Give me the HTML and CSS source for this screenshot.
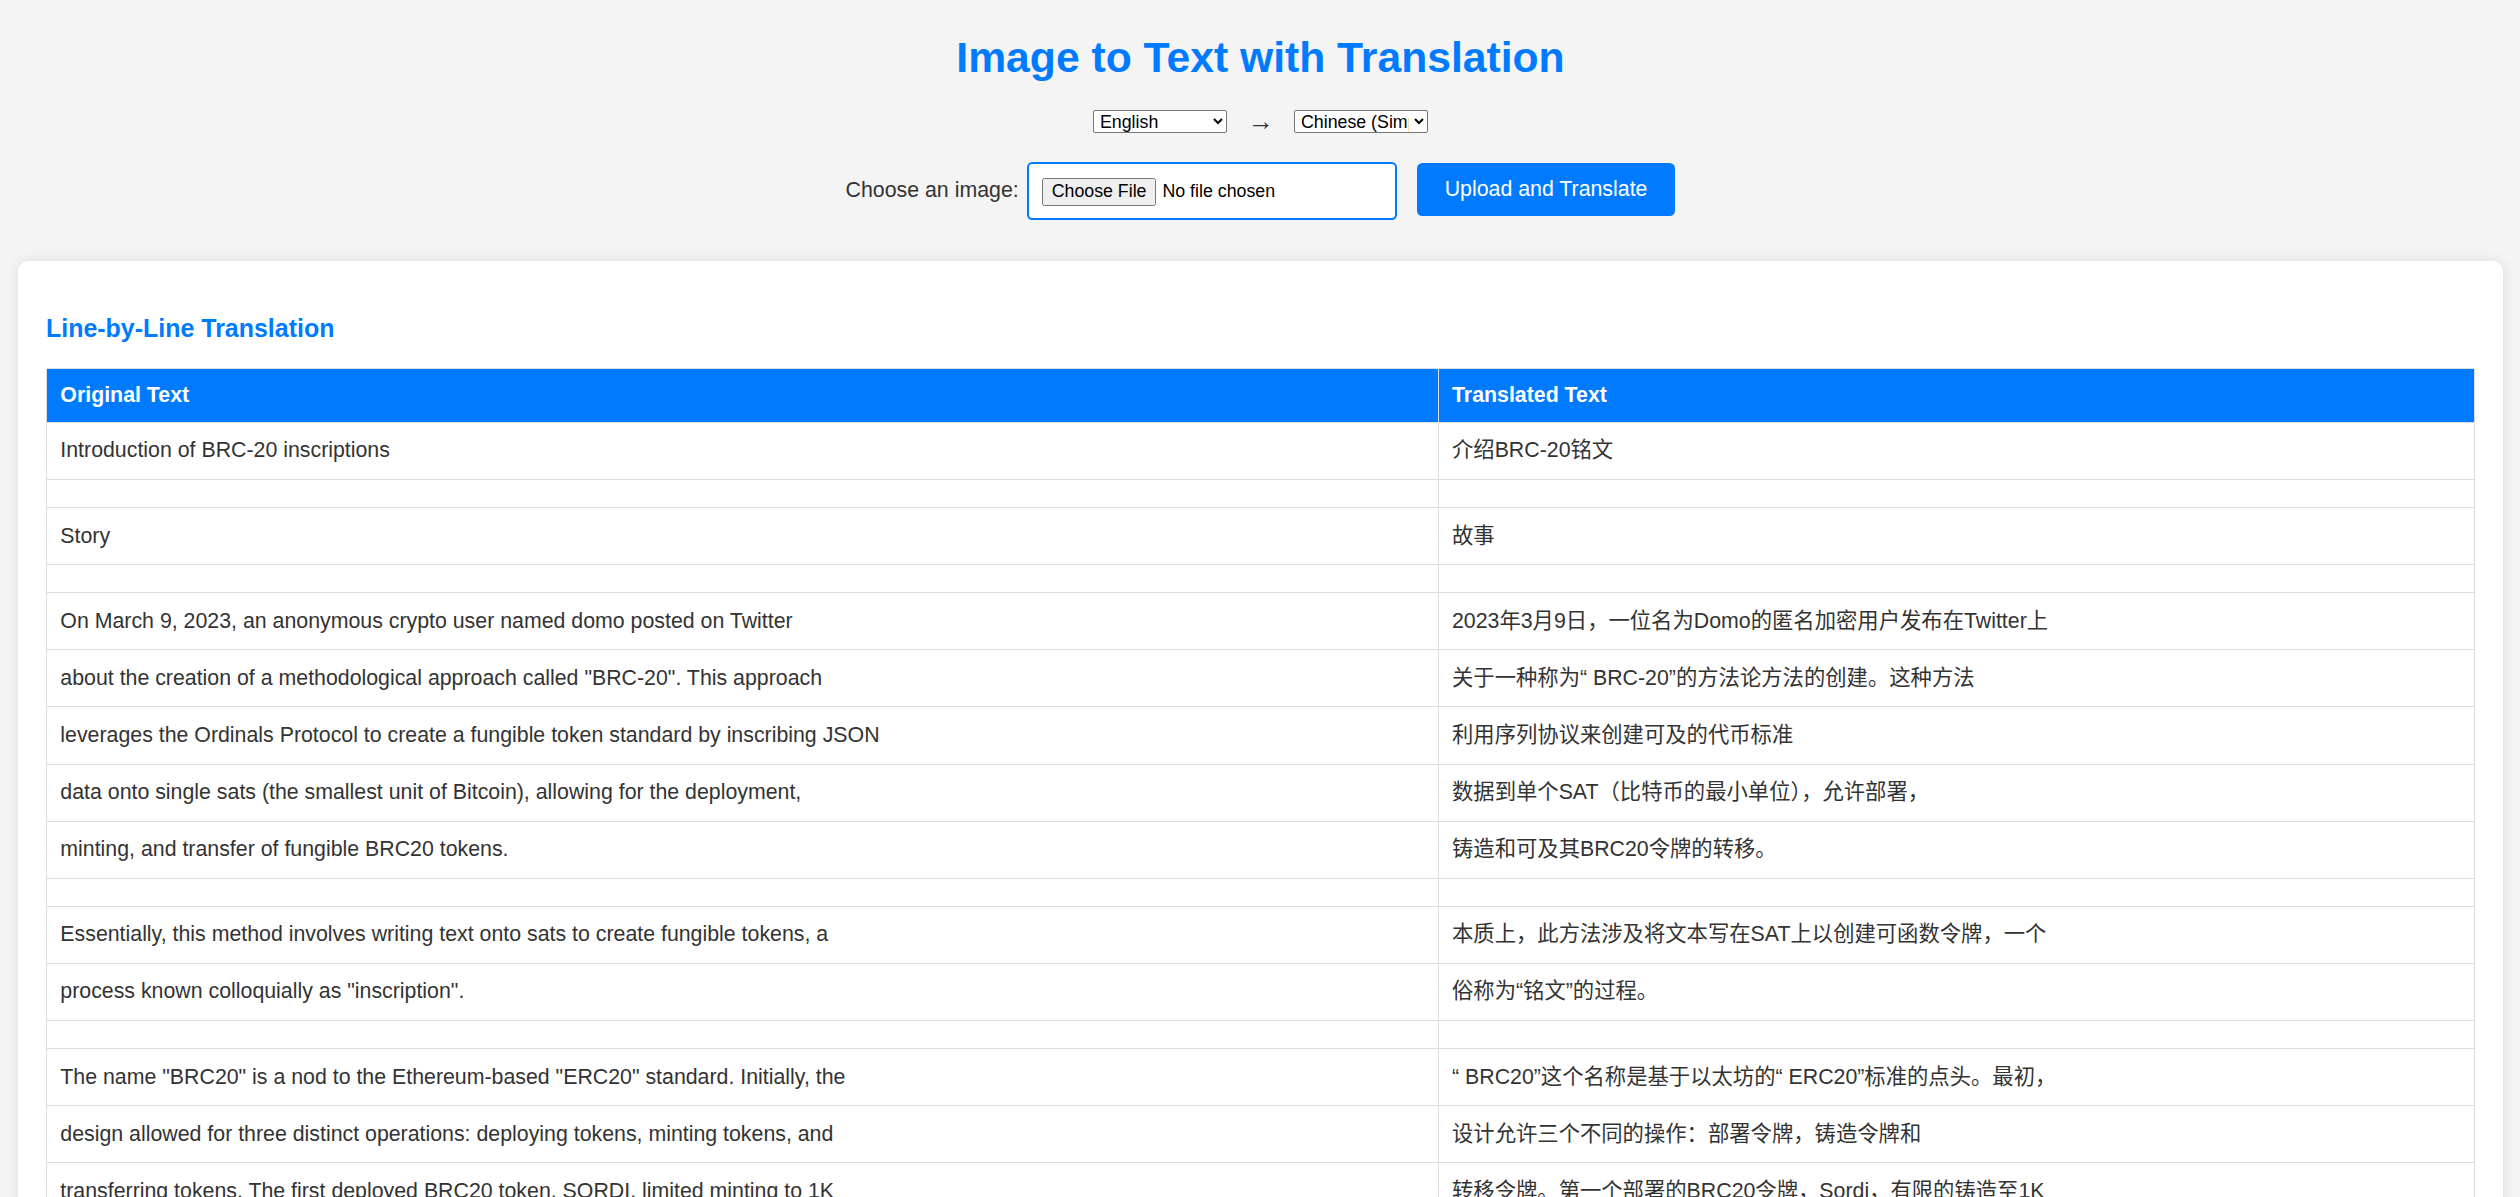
FILE: index.html
```html
<!DOCTYPE html>
<html lang="en">
<head>
<meta charset="utf-8">
<title>Image to Text with Translation</title>
<link rel="stylesheet" href="styles.css">
</head>
<body>
<header class="top">
  <h1 class="title">Image to Text with Translation</h1>
  <div class="lang-row">
    <select class="lang-select">
      <option>English</option>
      <option>Chinese (Simplified)</option>
    </select>
    <span class="arrow">→</span>
    <select class="lang-select">
      <option>Chinese (Simplified)</option>
      <option>English</option>
    </select>
  </div>
  <form class="upload-row">
    <label class="upload-label" for="file">Choose an image:</label>
    <input class="file-input" id="file" type="file">
    <button class="upload-btn" type="button">Upload and Translate</button>
  </form>
</header>
<main class="card">
  <h3 class="card-title">Line-by-Line Translation</h3>
  <table class="tr-table">
    <thead>
      <tr><th class="col-orig">Original Text</th><th class="col-trans">Translated Text</th></tr>
    </thead>
    <tbody>
      <tr><td>Introduction of BRC-20 inscriptions</td><td>介绍BRC-20铭文</td></tr>
      <tr><td></td><td></td></tr>
      <tr><td>Story</td><td>故事</td></tr>
      <tr><td></td><td></td></tr>
      <tr><td>On March 9, 2023, an anonymous crypto user named domo posted on Twitter</td><td>2023年3月9日，一位名为Domo的匿名加密用户发布在Twitter上</td></tr>
      <tr><td>about the creation of a methodological approach called "BRC-20". This approach</td><td>关于一种称为“ BRC-20”的方法论方法的创建。这种方法</td></tr>
      <tr><td>leverages the Ordinals Protocol to create a fungible token standard by inscribing JSON</td><td>利用序列协议来创建可及的代币标准</td></tr>
      <tr><td>data onto single sats (the smallest unit of Bitcoin), allowing for the deployment,</td><td>数据到单个SAT（比特币的最小单位），允许部署，</td></tr>
      <tr><td>minting, and transfer of fungible BRC20 tokens.</td><td>铸造和可及其BRC20令牌的转移。</td></tr>
      <tr><td></td><td></td></tr>
      <tr><td>Essentially, this method involves writing text onto sats to create fungible tokens, a</td><td>本质上，此方法涉及将文本写在SAT上以创建可函数令牌，一个</td></tr>
      <tr><td>process known colloquially as "inscription".</td><td>俗称为“铭文”的过程。</td></tr>
      <tr><td></td><td></td></tr>
      <tr><td>The name "BRC20" is a nod to the Ethereum-based "ERC20" standard. Initially, the</td><td>“ BRC20”这个名称是基于以太坊的“ ERC20”标准的点头。最初，</td></tr>
      <tr><td>design allowed for three distinct operations: deploying tokens, minting tokens, and</td><td>设计允许三个不同的操作：部署令牌，铸造令牌和</td></tr>
      <tr><td>transferring tokens. The first deployed BRC20 token, SORDI, limited minting to 1K</td><td>转移令牌。第一个部署的BRC20令牌，Sordi，有限的铸造至1K</td></tr>
    </tbody>
  </table>
</main>
</body>
</html>
```

FILE: styles.css
```css
html, body {
  margin: 0;
  padding: 0;
}

body {
  background: #f4f4f4;
  color: #333;
  font-family: "Liberation Sans", Arial, "Noto Sans CJK SC", sans-serif;
  font-size: 21.33px;
  padding: 0 17px 0 18px;
}

.top {
  display: flex;
  flex-direction: column;
  align-items: center;
}

.title {
  margin: 32.7px 0 28px;
  font-size: 42.67px;
  line-height: 49px;
  font-weight: bold;
  color: #007bff;
}

.lang-row {
  display: flex;
  align-items: center;
  height: 23px;
}

.lang-select {
  width: 134px;
  height: 23px;
  font-family: "Liberation Sans", Arial, sans-serif;
  font-size: 17.78px;
  color: #000;
  background: #fff;
  border: 1px solid #767676;
  border-radius: 2px;
  padding: 0 2px;
  margin: 0;
}

.arrow {
  margin: 0 20px 0 21px;
  font-size: 26px;
  line-height: 23px;
  color: #333;
}

.upload-row {
  display: flex;
  align-items: flex-start;
  margin: 29.6px 0 0;
}

.upload-label {
  font-size: 21.33px;
  line-height: 24.5px;
  margin: 15.4px 8px 0 0;
  color: #333;
}

.file-input {
  box-sizing: border-box;
  width: 370px;
  height: 58px;
  padding: 13px 13px;
  border: 2px solid #007bff;
  border-radius: 5.33px;
  background: #fff;
  font-family: "Liberation Sans", Arial, sans-serif;
  font-size: 17.78px;
  line-height: 28px;
  color: #000;
}

.file-input::file-selector-button {
  font-family: "Liberation Sans", Arial, sans-serif;
  font-size: 17.78px;
  height: 28px;
  padding: 0 9px;
  margin: 0 6px 0 0;
  border: 1px solid #767676;
  border-radius: 2.67px;
  background: #efefef;
  color: #000;
}

.upload-btn {
  margin: 1px 0 0 20px;
  padding: 14.2px 28px;
  border: none;
  border-radius: 5.33px;
  background: #007bff;
  color: #fff;
  font-family: "Liberation Sans", Arial, sans-serif;
  font-size: 21.33px;
  line-height: 24.5px;
}

.card {
  display: block;
  margin-top: 41px;
  background: #fff;
  border-radius: 10.67px;
  box-shadow: 0 0 13px rgba(0, 0, 0, 0.1);
  padding: 26.67px 28px 26.67px;
}

.card-title {
  margin: 26px 0 25px;
  font-size: 24.96px;
  line-height: 29px;
  font-weight: bold;
  color: #007bff;
}

.tr-table {
  width: 100%;
  border-collapse: collapse;
  table-layout: fixed;
}

.tr-table th,
.tr-table td {
  border: 1px solid #ddd;
  padding: 13.33px;
  text-align: left;
  vertical-align: middle;
}

.tr-table th {
  background: #007bff;
  color: #fff;
  font-weight: bold;
  line-height: 26.3px;
}

.tr-table td {
  padding: 13.55px 13.33px;
  line-height: 29px;
  color: #333;
}

.col-orig {
  width: 1364px;
}
```
